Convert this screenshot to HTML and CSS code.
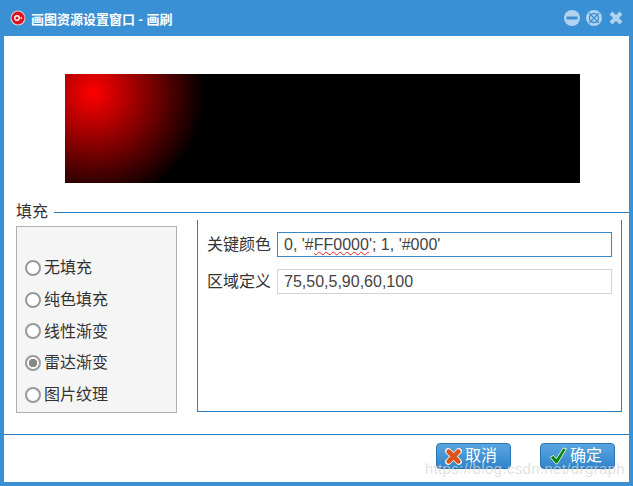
FILE: index.html
```html
<!DOCTYPE html>
<html lang="en">
<head>
    <meta charset="UTF-8">
    <meta name="viewport" content="width=device-width, initial-scale=1.0">
    <title>画图资源设置窗口 - 画刷</title>
    <link rel="stylesheet" href="styles.css">
</head>
<body>
    <div class="window">
        <div class="titlebar">
            <svg class="app-icon" width="16" height="16" viewBox="0 0 16 16">
                <circle cx="8" cy="8" r="7.5" fill="#d8d8d8"/>
                <circle cx="8" cy="8" r="6.5" fill="#e0141e"/>
                <circle cx="7" cy="8" r="2.2" fill="none" stroke="#fff" stroke-width="1.4"/>
                <rect x="10.4" y="7.2" width="1.6" height="1.6" fill="#fff"/>
            </svg>
            <div class="title">画图资源设置窗口 - 画刷</div>
            <div class="controls">
                <svg width="18" height="18" viewBox="0 0 18 18">
                    <circle cx="9" cy="9" r="8" fill="#b3d2ee"/>
                    <rect x="3.5" y="7.5" width="11" height="3" fill="#3a90d4"/>
                </svg>
                <svg width="18" height="18" viewBox="0 0 18 18">
                    <circle cx="9" cy="9" r="8" fill="#b3d2ee"/>
                    <circle cx="9" cy="9" r="4.5" fill="none" stroke="#3a90d4" stroke-width="1.3"/>
                    <path d="M4 4l10 10M14 4L4 14" stroke="#3a90d4" stroke-width="1.3"/>
                </svg>
                <svg width="14" height="14" viewBox="0 0 14 14">
                    <path d="M2 2l10 10M12 2L2 12" stroke="#b3d2ee" stroke-width="4"/>
                </svg>
            </div>
        </div>

        <div class="content">
            <div class="preview"></div>

            <div class="legend">
                <span class="legend-text">填充</span>
                <span class="legend-line"></span>
            </div>

            <div class="fill-section">
                <div class="fill-types">
                    <label class="radio-row"><input type="radio" name="fill">无填充</label>
                    <label class="radio-row"><input type="radio" name="fill">纯色填充</label>
                    <label class="radio-row"><input type="radio" name="fill">线性渐变</label>
                    <label class="radio-row"><input type="radio" name="fill" checked>雷达渐变</label>
                    <label class="radio-row"><input type="radio" name="fill">图片纹理</label>
                </div>
                <div class="fill-props">
                    <div class="prop-row">
                        <span class="prop-label">关键颜色</span>
                        <div class="field focused">0, '#<span class="misspelt">FF0000</span>'; 1, '#000'</div>
                    </div>
                    <div class="prop-row">
                        <span class="prop-label">区域定义</span>
                        <div class="field">75,50,5,90,60,100</div>
                    </div>
                </div>
            </div>

            <div class="footer">
                <button class="btn">
                    <svg width="17" height="17" viewBox="0 0 16 16">
                        <path d="M3 3l10 10M13 3L3 13" stroke="#f4e8e0" stroke-width="6" stroke-linecap="round"/>
                        <path d="M3.5 3.5l9 9M12.5 3.5l-9 9" stroke="#dc5418" stroke-width="4.4" stroke-linecap="round"/>
                    </svg>
                    取消
                </button>
                <button class="btn">
                    <svg width="18" height="18" viewBox="0 0 16 16">
                        <path d="M1 9l3-1.5 2.5 3L12.5 1l3 .5L7.5 15H6z" fill="#0b840e" stroke="#fff" stroke-width=".7"/>
                    </svg>
                    确定
                </button>
            </div>
        </div>

        <div class="watermark">https://blog.csdn.net/drgraph</div>
    </div>
</body>
</html>
```

FILE: styles.css
```css
body {
    margin: 0;
    padding: 0;
    font-family: "Liberation Sans", "Noto Sans CJK SC", sans-serif;
    color: #333;
    font-size: 16px;
}

.window {
    position: relative;
    width: 633px;
    height: 486px;
    box-sizing: border-box;
    background-color: #3a90d4;
    padding: 0 4px 4px 4px;
    display: flex;
    flex-direction: column;
    overflow: hidden;
}

.titlebar {
    height: 36px;
    display: flex;
    align-items: center;
    flex-shrink: 0;
}

.app-icon {
    margin-left: 6px;
}

.title {
    margin-left: 5px;
    color: #fff;
    font-size: 13px;
    font-weight: bold;
}

.controls {
    margin-left: auto;
    margin-right: 6px;
    display: flex;
    align-items: center;
    gap: 4px;
}

.controls svg:last-child {
    margin-left: 2px;
}

.content {
    flex: 1;
    background-color: #fff;
    display: flex;
    flex-direction: column;
}

.preview {
    width: 515px;
    height: 109px;
    margin: 38px 0 0 61px;
    background: radial-gradient(circle 112px at 28px 19px, #f00, #000);
}

.legend {
    height: 18px;
    margin: 20px 0 5px 12px;
    display: flex;
    align-items: center;
    gap: 6px;
    line-height: 18px;
}

.legend-line {
    flex: 1;
    height: 1px;
    background-color: #2a7cc0;
}

.fill-section {
    display: flex;
    margin-top: -6px;
    padding-left: 12px;
}

.fill-types {
    width: 159px;
    height: 160px;
    margin-top: 6px;
    padding-top: 25px;
    border: 1px solid #b0b0b0;
    background-color: #f5f5f5;
}

.radio-row {
    display: flex;
    align-items: center;
    height: 31.7px;
    padding-left: 8px;
    gap: 3px;
    line-height: 31px;
}

.radio-row input {
    appearance: none;
    width: 16px;
    height: 16px;
    margin: 0;
    border: 2px solid #999;
    border-radius: 50%;
    background-color: #fff;
    box-sizing: border-box;
}

.radio-row input:checked {
    background: radial-gradient(circle, #888 0, #888 4px, #fff 4.5px);
}

.fill-props {
    width: 425px;
    height: 192px;
    margin-left: 20px;
    box-sizing: border-box;
    border: 1px solid #2a7cc0;
    border-top: none;
    padding: 12px 9px 0 9px;
}

.prop-row {
    display: flex;
    align-items: center;
    gap: 6px;
    margin-bottom: 12px;
}

.prop-label {
    white-space: nowrap;
    line-height: 25px;
}

.field {
    flex: 1;
    height: 25px;
    box-sizing: border-box;
    border: 1px solid #d4d4d4;
    padding-left: 6px;
    line-height: 23px;
    color: #444;
}

.field.focused {
    border-color: #3a87c8;
}

.misspelt {
    text-decoration: underline wavy #e02020 1px;
}

.footer {
    margin-top: 21px;
    border-top: 1px solid #2a7cc0;
    flex: 1;
    display: flex;
    justify-content: flex-end;
    align-items: flex-start;
    gap: 29px;
    padding: 8px 14px 0 0;
}

.btn {
    width: 75px;
    height: 26px;
    display: flex;
    align-items: center;
    gap: 3px;
    padding: 0 0 0 8px;
    border: 1px solid #2a74b0;
    border-radius: 4px;
    background: linear-gradient(#5aa5e0, #3085cc);
    color: #fff;
    font-family: inherit;
    font-size: 16px;
    line-height: 16px;
}

.watermark {
    position: absolute;
    right: 8px;
    bottom: 10px;
    font-size: 15px;
    line-height: 14px;
    color: rgba(215, 215, 215, 0.75);
    letter-spacing: 0.35px;
}
```
